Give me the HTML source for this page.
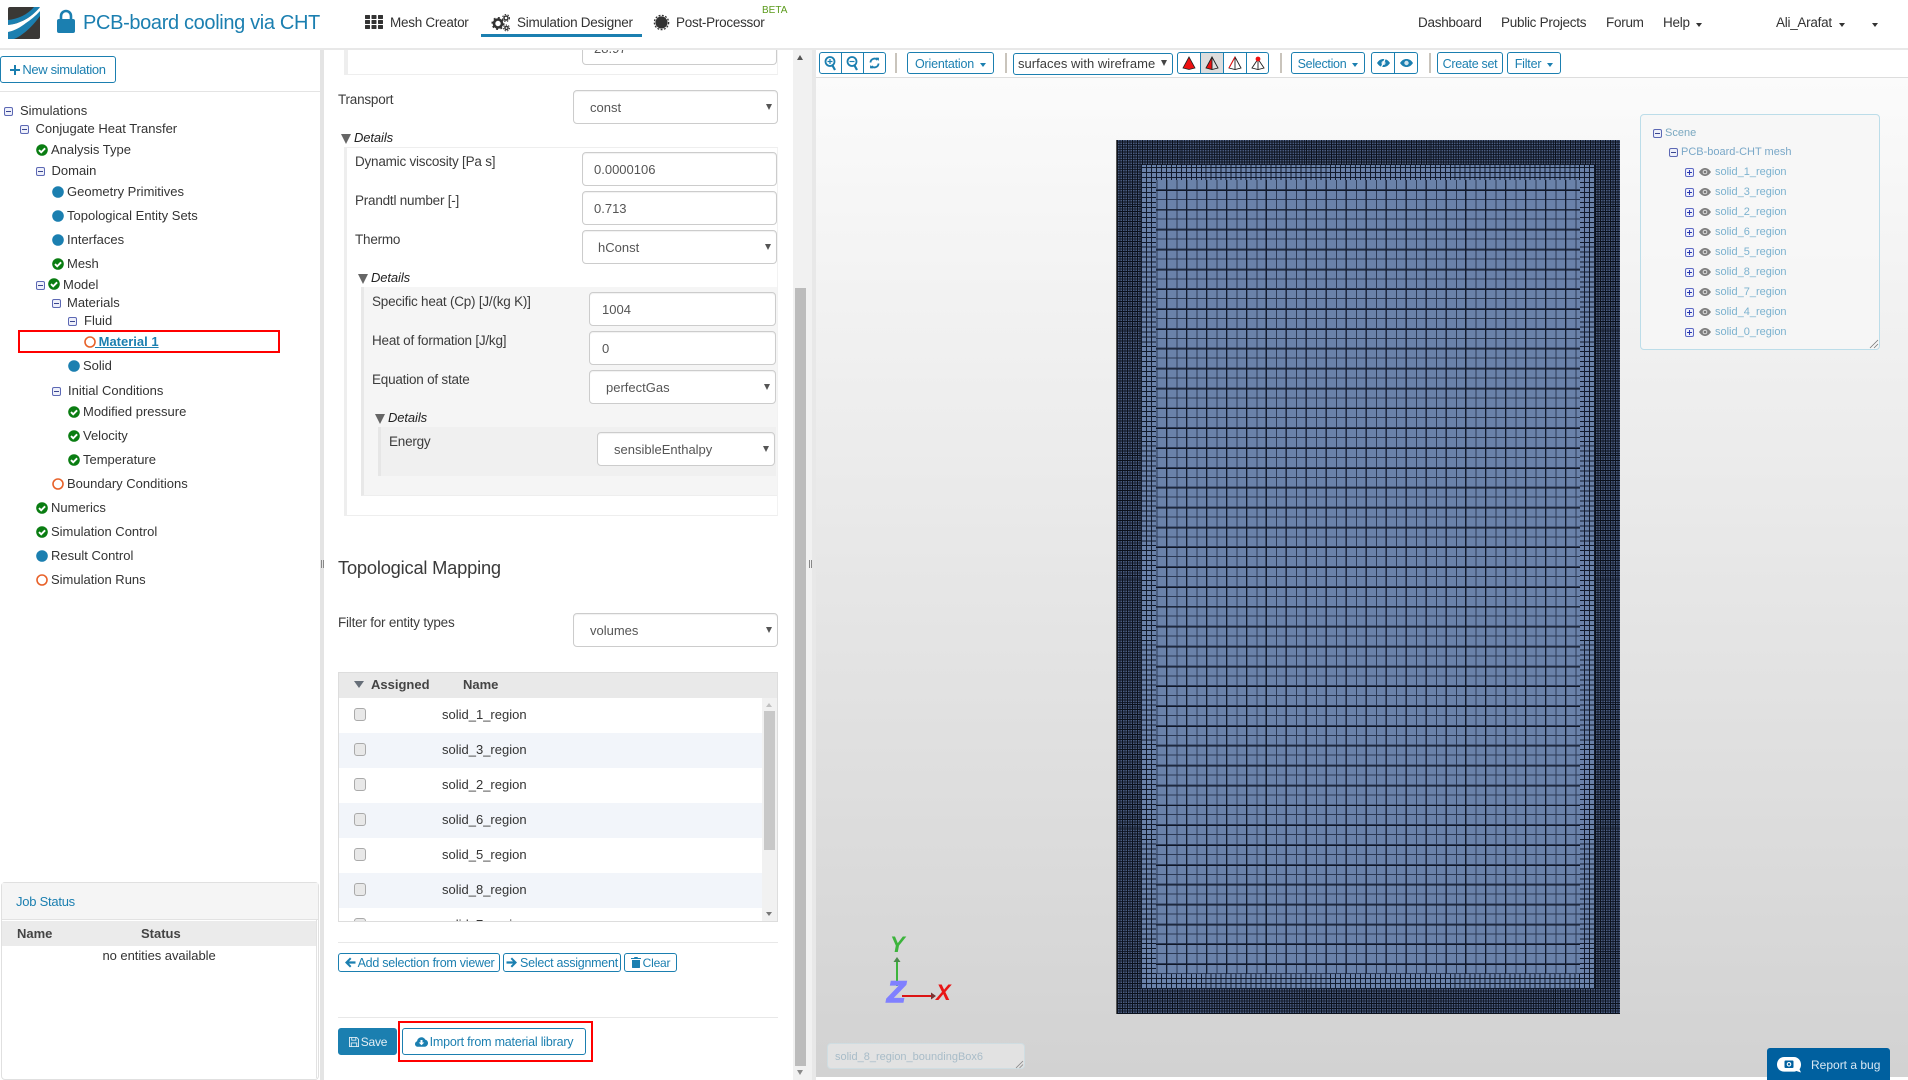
<!DOCTYPE html>
<html lang="en"><head><meta charset="utf-8"><title>PCB-board cooling via CHT</title>
<style>
html,body{margin:0;padding:0;background:#fff}
body{width:1908px;height:1080px;position:relative;overflow:hidden;font-family:"Liberation Sans",sans-serif;font-size:13px;color:#333}
.a,.t,.l,.v,.b,.i,.s,.n{position:absolute;box-sizing:border-box}
.t{line-height:16px;white-space:nowrap}
.l{line-height:16px;white-space:nowrap;font-size:13.5px;letter-spacing:-.22px;color:#3c3c3c;margin-top:1px}
.v{line-height:16px;white-space:nowrap;color:#555}
.n{line-height:16px;white-space:nowrap;font-size:13.5px;letter-spacing:-.27px;color:#333}
.i{background:#fff;border:1px solid #ccc;border-radius:4px;box-shadow:inset 0 1px 1px rgba(0,0,0,.06)}
.i.s1:after{content:"";position:absolute;right:5px;top:13px;border-left:3px solid transparent;border-right:3px solid transparent;border-top:6px solid #555}
.b{border:1px solid #1b7fb0;border-radius:3px;color:#1b7fb0;background:#fff;font-size:12.5px;letter-spacing:-.2px;line-height:16px;white-space:nowrap;display:flex;align-items:center;justify-content:center}
.car{display:inline-block;border-left:3px solid transparent;border-right:3px solid transparent;border-top:4px solid currentColor;margin-left:6px;margin-top:2px}
.tri{position:absolute;width:0;height:0;border-left:5.5px solid transparent;border-right:5.5px solid transparent;border-top:10px solid #666}
.d{font-style:italic;color:#222;position:absolute;line-height:16px;font-size:13px;letter-spacing:-.1px}
svg.ic{position:absolute;overflow:visible}
.tb{color:#3b3b3b;position:absolute;line-height:16px;white-space:nowrap;font-size:13px}
.row{position:absolute;left:339px;width:424px;height:35px;border-bottom:1px solid #e8e8e8}
.cb{position:absolute;left:15px;top:10px;width:12px;height:13px;border:1px solid #aaa;border-radius:3px;background:#e8e8e8;box-sizing:border-box}
.rn{position:absolute;left:103px;top:9px;line-height:16px;color:#333}
.sc{position:absolute;font-size:11px;line-height:14px;white-space:nowrap;color:#7cb2cf;margin-top:1px}
.bar{position:absolute;width:2px;background:#c9c4bc}
</style></head><body>
<svg width="0" height="0" style="position:absolute">
<defs>
<symbol id="ok" viewBox="0 0 12 12"><circle cx="6" cy="6" r="5.8" fill="#0a7d12"/><path d="M3 6.100l2.200 2.200L9.100 4.300" stroke="#fff" stroke-width="1.900" fill="none"/></symbol>
<symbol id="dot" viewBox="0 0 12 12"><circle cx="6" cy="6" r="5.8" fill="#1b7fb0"/></symbol>
<symbol id="ring" viewBox="0 0 12 12"><circle cx="6" cy="6" r="5" fill="#fff" stroke="#e8622a" stroke-width="1.600"/></symbol>
<symbol id="min" viewBox="0 0 9 9"><rect x=".5" y=".5" width="8" height="8" rx="1.500" fill="#eef0fa" stroke="#5c68b4"/><path d="M2 4.500h5" stroke="#3a4690"/></symbol>
<symbol id="pls" viewBox="0 0 9 9"><rect x=".5" y=".5" width="8" height="8" rx="1.500" fill="#eef0fa" stroke="#5c68c4"/><path d="M2 4.500h5M4.500 2v5" stroke="#2a38b0"/></symbol>
<symbol id="eye" viewBox="0 0 12 8"><path d="M0 4C2 1 4 0 6 0s4 1 6 4C10 7 8 8 6 8S2 7 0 4z" fill="#808080"/><circle cx="6" cy="4" r="2.300" fill="#ddd"/><circle cx="6" cy="4" r="1.300" fill="#777"/></symbol>
</defs></svg>

<!-- splitters -->
<div class="a" style="left:320px;top:50px;width:4px;height:1030px;background:#e4e4e4"></div>
<div class="a" style="left:812px;top:50px;width:4px;height:1030px;background:#e8e8e8"></div>

<!-- middle panel -->
<div class="a" style="left:793px;top:50px;width:19px;height:1030px;background:#f1f1f1"></div>
<div class="a" style="left:795px;top:288px;width:11px;height:778px;background:#bcbcbc"></div>
<div class="a" style="left:797px;top:55px;border-left:3.500px solid transparent;border-right:3.500px solid transparent;border-bottom:5px solid #555"></div>
<div class="a" style="left:797px;top:1070px;border-left:3.500px solid transparent;border-right:3.500px solid transparent;border-top:5px solid #8a8a8a"></div>
<div class="a" style="left:321px;top:560px;width:3px;height:8px;border-left:1px solid #888;border-right:1px solid #888;box-sizing:border-box"></div>
<div class="a" style="left:809px;top:560px;width:3px;height:8px;border-left:1px solid #888;border-right:1px solid #888;box-sizing:border-box"></div>

<div class="a" style="left:344px;top:40px;width:434px;height:35px;border-left:4px solid #eee;border-bottom:1px solid #eee;border-right:1px solid #f2f2f2;box-sizing:border-box"></div>
<div class="i" style="left:582px;top:30px;width:195px;height:35px"></div>
<div class="v" style="left:594px;top:41px">28.97</div>

<div class="l" style="left:338px;top:91px">Transport</div>
<div class="i s1" style="left:573px;top:90px;width:205px;height:34px"></div>
<div class="v" style="left:590px;top:100px">const</div>

<div class="tri" style="left:341px;top:134px"></div>
<div class="d" style="left:354px;top:130px">Details</div>

<div class="a" style="left:344px;top:147px;width:434px;height:369px;border-top:1px solid #eee;border-left:3px solid #eee;border-bottom:1px solid #eee;border-right:1px solid #f2f2f2;box-sizing:border-box"></div>
<div class="l" style="left:355px;top:153px">Dynamic viscosity [Pa s]</div>
<div class="i" style="left:582px;top:152px;width:195px;height:34px"></div>
<div class="v" style="left:594px;top:162px">0.0000106</div>
<div class="l" style="left:355px;top:192px">Prandtl number [-]</div>
<div class="i" style="left:582px;top:191px;width:195px;height:34px"></div>
<div class="v" style="left:594px;top:201px">0.713</div>
<div class="l" style="left:355px;top:231px">Thermo</div>
<div class="i s1" style="left:582px;top:230px;width:195px;height:34px"></div>
<div class="v" style="left:598px;top:240px">hConst</div>

<div class="tri" style="left:358px;top:274px"></div>
<div class="d" style="left:371px;top:270px">Details</div>

<div class="a" style="left:361px;top:287px;width:416px;height:209px;background:#f5f5f5;border-left:3px solid #e8e8e8;border-bottom:1px solid #eee;box-sizing:border-box"></div>
<div class="l" style="left:372px;top:293px">Specific heat (Cp) [J/(kg K)]</div>
<div class="i" style="left:589px;top:292px;width:187px;height:34px"></div>
<div class="v" style="left:602px;top:302px">1004</div>
<div class="l" style="left:372px;top:332px">Heat of formation [J/kg]</div>
<div class="i" style="left:589px;top:331px;width:187px;height:34px"></div>
<div class="v" style="left:602px;top:341px">0</div>
<div class="l" style="left:372px;top:371px">Equation of state</div>
<div class="i s1" style="left:589px;top:370px;width:187px;height:34px"></div>
<div class="v" style="left:606px;top:380px">perfectGas</div>

<div class="tri" style="left:375px;top:414px"></div>
<div class="d" style="left:388px;top:410px">Details</div>
<div class="a" style="left:378px;top:427px;width:398px;height:49px;background:#f0f0f0;border-left:3px solid #e6e6e6;box-sizing:border-box"></div>
<div class="l" style="left:389px;top:433px">Energy</div>
<div class="i s1" style="left:597px;top:432px;width:178px;height:34px"></div>
<div class="v" style="left:614px;top:442px">sensibleEnthalpy</div>

<div class="t" style="left:338px;top:556px;line-height:24px;font-size:18.3px;letter-spacing:-.2px;color:#3a3a3a">Topological Mapping</div>
<div class="l" style="left:338px;top:614px">Filter for entity types</div>
<div class="i s1" style="left:573px;top:613px;width:205px;height:34px"></div>
<div class="v" style="left:590px;top:623px">volumes</div>

<!-- assignment table -->
<div class="a" style="left:338px;top:672px;width:440px;height:250px;border:1px solid #ddd;box-sizing:border-box;overflow:hidden;background:#fff"></div>
<div class="a" style="left:339px;top:673px;width:438px;height:25px;background:#e9e9e9"></div>
<div class="a" style="left:354px;top:681px;border-left:5px solid transparent;border-right:5px solid transparent;border-top:7px solid #666e78"></div>
<div class="t" style="left:371px;top:677px;font-weight:bold;color:#444">Assigned</div>
<div class="t" style="left:463px;top:677px;font-weight:bold;color:#444">Name</div>
<div class="a" style="left:339px;top:698px;width:424px;height:223px;overflow:hidden">
<div class="row" style="left:0;top:0;background:#fff"><div class="cb"></div><div class="rn">solid_1_region</div></div>
<div class="row" style="left:0;top:35px;background:#f2f5fa"><div class="cb"></div><div class="rn">solid_3_region</div></div>
<div class="row" style="left:0;top:70px;background:#fff"><div class="cb"></div><div class="rn">solid_2_region</div></div>
<div class="row" style="left:0;top:105px;background:#f2f5fa"><div class="cb"></div><div class="rn">solid_6_region</div></div>
<div class="row" style="left:0;top:140px;background:#fff"><div class="cb"></div><div class="rn">solid_5_region</div></div>
<div class="row" style="left:0;top:175px;background:#f2f5fa"><div class="cb"></div><div class="rn">solid_8_region</div></div>
<div class="row" style="left:0;top:210px;background:#fff"><div class="cb"></div><div class="rn">solid_7_region</div></div>
</div>
<div class="a" style="left:762px;top:698px;width:15px;height:223px;background:#f1f1f1"></div>
<div class="a" style="left:764px;top:711px;width:11px;height:139px;background:#c8c8c8"></div>
<div class="a" style="left:766px;top:703px;border-left:3.500px solid transparent;border-right:3.500px solid transparent;border-bottom:4px solid #c0c0c0"></div>
<div class="a" style="left:766px;top:912px;border-left:3.500px solid transparent;border-right:3.500px solid transparent;border-top:4px solid #777"></div>

<div class="a" style="left:338px;top:942px;width:440px;height:1px;background:#e8e8e8"></div>
<div class="b" style="left:338px;top:953px;width:162px;height:19px;letter-spacing:-.25px"><svg width="12" height="11" viewBox="0 0 12 11" style="margin-right:2px"><path d="M6 .5L1 5.500l5 5 1.400-1.400L5 6.600h6.500V4.400H5l2.400-2.500z" fill="#1b7fb0"/></svg>Add selection from viewer</div>
<div class="b" style="left:503px;top:953px;width:118px;height:19px;letter-spacing:-.25px"><svg width="12" height="11" viewBox="0 0 12 11" style="margin-right:2px"><path d="M6 .5l5 5-5 5-1.400-1.400L7 6.600H.5V4.400H7L4.600 1.900z" fill="#1b7fb0"/></svg>Select assignment</div>
<div class="b" style="left:624px;top:953px;width:53px;height:19px;font-size:12px"><svg width="10" height="11" viewBox="0 0 10 11" style="margin-right:2px"><path d="M3.500 0h3l.5 1h3v1H0V1h3zM1 3h8v7.200c0 .5-.3.8-.8.8H1.800c-.5 0-.8-.3-.8-.8z" fill="#1b7fb0"/></svg>Clear</div>
<div class="a" style="left:338px;top:1017px;width:440px;height:1px;background:#e8e8e8"></div>
<div class="b" style="left:338px;top:1028px;width:59px;height:27px;background:#1b7fb0;color:#e4eef5;font-size:12px;padding-left:1px"><svg width="10" height="10" viewBox="0 0 11 11" style="margin-right:2px"><path d="M.5.5h8l2 2v8H.5z M3 .5v3h4.500v-3 M2.500 10.500v-4h6v4" fill="none" stroke="#e4eef5"/></svg>Save</div>
<div class="b" style="left:402px;top:1028px;width:184px;height:27px"><svg width="13" height="10" viewBox="0 0 13 10" style="margin-right:2px"><path d="M3 9.800C1.300 9.800 0 8.600 0 7c0-1.300.9-2.400 2.100-2.700C2.200 2 4.100.2 6.400.2c1.800 0 3.300 1 4 2.600 1.500.3 2.600 1.600 2.600 3.300 0 2-1.600 3.700-3.600 3.700z" fill="#1b7fb0"/><path d="M5.500 3h2v2.500h1.800L6.500 8.300 3.700 5.500h1.800z" fill="#fff"/></svg>Import from material library</div>
<div class="a" style="left:398px;top:1021px;width:195px;height:41px;border:2.500px solid #f00;box-sizing:border-box"></div>

<!-- left sidebar -->
<div class="b" style="left:0;top:56px;width:116px;height:27px;font-size:13px;letter-spacing:-.35px"><svg width="10" height="10" viewBox="0 0 10 10" style="margin-right:2px"><path d="M4 0h2v4h4v2H6v4H4V6H0V4h4z" fill="#1b7fb0"/></svg>New simulation</div>
<div class="a" style="left:0;top:91px;width:320px;height:1px;background:#e4e4e4"></div>

<svg class="ic" style="left:4px;top:106.500px" width="9" height="9"><use href="#min"/></svg><div class="t" style="left:20px;top:102.500px">Simulations</div>
<svg class="ic" style="left:20px;top:124.500px" width="9" height="9"><use href="#min"/></svg><div class="t" style="left:35.500px;top:121px">Conjugate Heat Transfer</div>
<svg class="ic" style="left:36px;top:144px" width="12" height="12"><use href="#ok"/></svg><div class="t" style="left:51px;top:142px">Analysis Type</div>
<svg class="ic" style="left:36px;top:166.500px" width="9" height="9"><use href="#min"/></svg><div class="t" style="left:51.500px;top:163px">Domain</div>
<svg class="ic" style="left:52px;top:186px" width="12" height="12"><use href="#dot"/></svg><div class="t" style="left:67px;top:184px">Geometry Primitives</div>
<svg class="ic" style="left:52px;top:210px" width="12" height="12"><use href="#dot"/></svg><div class="t" style="left:67px;top:208px">Topological Entity Sets</div>
<svg class="ic" style="left:52px;top:234px" width="12" height="12"><use href="#dot"/></svg><div class="t" style="left:67px;top:232px">Interfaces</div>
<svg class="ic" style="left:52px;top:258px" width="12" height="12"><use href="#ok"/></svg><div class="t" style="left:67px;top:256px">Mesh</div>
<svg class="ic" style="left:36px;top:280.500px" width="9" height="9"><use href="#min"/></svg><svg class="ic" style="left:48px;top:278px" width="12" height="12"><use href="#ok"/></svg><div class="t" style="left:63px;top:277px">Model</div>
<svg class="ic" style="left:52px;top:298.500px" width="9" height="9"><use href="#min"/></svg><div class="t" style="left:67px;top:295px">Materials</div>
<svg class="ic" style="left:68px;top:316.500px" width="9" height="9"><use href="#min"/></svg><div class="t" style="left:84px;top:313px">Fluid</div>
<div class="a" style="left:18px;top:330px;width:262px;height:23px;border:2px solid #f00;box-sizing:border-box"></div>
<svg class="ic" style="left:84px;top:336px" width="12" height="12"><use href="#ring"/></svg><div class="t" style="left:95px;top:334px;font-weight:bold;color:#1b7fb0;text-decoration:underline;white-space:pre"> Material 1</div>
<svg class="ic" style="left:68px;top:360px" width="12" height="12"><use href="#dot"/></svg><div class="t" style="left:83px;top:358px">Solid</div>
<svg class="ic" style="left:52px;top:386.500px" width="9" height="9"><use href="#min"/></svg><div class="t" style="left:68px;top:383px">Initial Conditions</div>
<svg class="ic" style="left:68px;top:406px" width="12" height="12"><use href="#ok"/></svg><div class="t" style="left:83px;top:404px">Modified pressure</div>
<svg class="ic" style="left:68px;top:430px" width="12" height="12"><use href="#ok"/></svg><div class="t" style="left:83px;top:428px">Velocity</div>
<svg class="ic" style="left:68px;top:454px" width="12" height="12"><use href="#ok"/></svg><div class="t" style="left:83px;top:452px">Temperature</div>
<svg class="ic" style="left:52px;top:478px" width="12" height="12"><use href="#ring"/></svg><div class="t" style="left:67px;top:476px">Boundary Conditions</div>
<svg class="ic" style="left:36px;top:502px" width="12" height="12"><use href="#ok"/></svg><div class="t" style="left:51px;top:500px">Numerics</div>
<svg class="ic" style="left:36px;top:526px" width="12" height="12"><use href="#ok"/></svg><div class="t" style="left:51px;top:524px">Simulation Control</div>
<svg class="ic" style="left:36px;top:550px" width="12" height="12"><use href="#dot"/></svg><div class="t" style="left:51px;top:548px">Result Control</div>
<svg class="ic" style="left:36px;top:574px" width="12" height="12"><use href="#ring"/></svg><div class="t" style="left:51px;top:572px">Simulation Runs</div>

<!-- job status -->
<div class="a" style="left:1px;top:882px;width:318px;height:198px;border:1px solid #e0e0e0;border-radius:4px;box-sizing:border-box;background:#fff"></div>
<div class="a" style="left:2px;top:883px;width:316px;height:37px;background:#f5f5f5;border-bottom:1px solid #e2e2e2;box-sizing:border-box"></div>
<div class="t" style="left:16px;top:894px;font-size:13px;letter-spacing:-.25px;color:#1b7fb0">Job Status</div>
<div class="a" style="left:2px;top:921px;width:315px;height:25px;background:#ebebeb"></div>
<div class="t" style="left:17px;top:926px;font-weight:bold;color:#444">Name</div>
<div class="t" style="left:141px;top:926px;font-weight:bold;color:#444">Status</div>
<div class="t" style="left:102.500px;top:948px;font-size:13px;letter-spacing:-.05px;color:#333">no entities available</div>
<div class="a" style="left:316px;top:920px;width:1px;height:158px;background:#e2e2e2"></div>

<!-- viewer -->
<div class="a" style="left:816px;top:77px;width:1092px;height:1000px;border-top:1px solid #ddd;background:linear-gradient(#fbfbfb,#d2d2d2);box-sizing:border-box"></div>

<!-- mesh -->
<div class="a" style="left:1116px;top:140px;width:504px;height:874px;background-color:#4a5c80;background-image:repeating-linear-gradient(90deg,#0b111c 0 1px,transparent 1px 4.98px),repeating-linear-gradient(0deg,#0b111c 0 1px,transparent 1px 4.98px),repeating-linear-gradient(90deg,rgba(14,20,34,.85) 0 1px,transparent 1px 2.49px),repeating-linear-gradient(0deg,rgba(14,20,34,.85) 0 1px,transparent 1px 2.49px);border-left:1px solid #555"></div>
<div class="a" style="left:1141px;top:165px;width:454px;height:824px;background-color:#6a82aa;background-image:repeating-linear-gradient(90deg,#111a2c 0 1px,transparent 1px 4.98px),repeating-linear-gradient(0deg,#111a2c 0 1px,transparent 1px 4.975px)"></div>
<div class="a" style="left:1156px;top:180px;width:424px;height:794px;background-color:#6a82aa;background-image:repeating-linear-gradient(90deg,transparent 0 10px,#121b2e 10px 11px,transparent 11px 19.95px),repeating-linear-gradient(0deg,transparent 0 9px,#101828 9px 10px,transparent 10px 19.85px),repeating-linear-gradient(90deg,transparent 0 0.5px,#2c3a56 0.5px 1.5px,transparent 1.5px 9.975px),repeating-linear-gradient(0deg,#2c3a56 0 1px,transparent 1px 9.925px)"></div>

<!-- triad -->
<svg class="ic" style="left:870px;top:930px" width="90" height="85">
<path d="M27 30V56" stroke="#3cb43c" stroke-width="2"/><path d="M27 27l-3.500 5h7z" fill="#4c8a4c"/>
<path d="M32 66H63" stroke="#dc1414" stroke-width="2"/><path d="M66 66l-5-3.500v7z" fill="#7a3030"/>
<text x="20" y="22" font-family="Liberation Sans" font-style="italic" font-weight="bold" font-size="22" fill="#3cb43c">Y</text>
<text x="66" y="70" font-family="Liberation Sans" font-style="italic" font-weight="bold" font-size="22" fill="#e81616">X</text>
<text x="17" y="72" font-family="Liberation Sans" font-style="italic" font-weight="bold" font-size="30" fill="#8080ff" stroke="#8080ff" stroke-width="1.500">Z</text>
</svg>

<!-- scene tree -->
<div class="a" style="left:1640px;top:114px;width:240px;height:236px;border:1px solid #bcdde9;border-radius:4px;background:rgba(246,246,246,.92);box-sizing:border-box"></div>
<svg class="ic" style="left:1653px;top:129px" width="9" height="9"><use href="#min"/></svg><div class="sc" style="left:1665px;top:125px;color:#7aa8c0">Scene</div>
<svg class="ic" style="left:1669px;top:148px" width="9" height="9"><use href="#min"/></svg><div class="sc" style="left:1681px;top:144px;color:#7aa8c8">PCB-board-CHT mesh</div>
<svg class="ic" style="left:1685px;top:168px" width="9" height="9"><use href="#pls"/></svg><svg class="ic" style="left:1699px;top:168px" width="12" height="8"><use href="#eye"/></svg><div class="sc" style="left:1715px;top:164px">solid_1_region</div>
<svg class="ic" style="left:1685px;top:188px" width="9" height="9"><use href="#pls"/></svg><svg class="ic" style="left:1699px;top:188px" width="12" height="8"><use href="#eye"/></svg><div class="sc" style="left:1715px;top:184px">solid_3_region</div>
<svg class="ic" style="left:1685px;top:208px" width="9" height="9"><use href="#pls"/></svg><svg class="ic" style="left:1699px;top:208px" width="12" height="8"><use href="#eye"/></svg><div class="sc" style="left:1715px;top:204px">solid_2_region</div>
<svg class="ic" style="left:1685px;top:228px" width="9" height="9"><use href="#pls"/></svg><svg class="ic" style="left:1699px;top:228px" width="12" height="8"><use href="#eye"/></svg><div class="sc" style="left:1715px;top:224px">solid_6_region</div>
<svg class="ic" style="left:1685px;top:248px" width="9" height="9"><use href="#pls"/></svg><svg class="ic" style="left:1699px;top:248px" width="12" height="8"><use href="#eye"/></svg><div class="sc" style="left:1715px;top:244px">solid_5_region</div>
<svg class="ic" style="left:1685px;top:268px" width="9" height="9"><use href="#pls"/></svg><svg class="ic" style="left:1699px;top:268px" width="12" height="8"><use href="#eye"/></svg><div class="sc" style="left:1715px;top:264px">solid_8_region</div>
<svg class="ic" style="left:1685px;top:288px" width="9" height="9"><use href="#pls"/></svg><svg class="ic" style="left:1699px;top:288px" width="12" height="8"><use href="#eye"/></svg><div class="sc" style="left:1715px;top:284px">solid_7_region</div>
<svg class="ic" style="left:1685px;top:308px" width="9" height="9"><use href="#pls"/></svg><svg class="ic" style="left:1699px;top:308px" width="12" height="8"><use href="#eye"/></svg><div class="sc" style="left:1715px;top:304px">solid_4_region</div>
<svg class="ic" style="left:1685px;top:328px" width="9" height="9"><use href="#pls"/></svg><svg class="ic" style="left:1699px;top:328px" width="12" height="8"><use href="#eye"/></svg><div class="sc" style="left:1715px;top:324px">solid_0_region</div>
<svg class="ic" style="left:1870px;top:340px" width="8" height="8"><path d="M0 8L8 0M4 8L8 4" stroke="#777" stroke-width=".8"/></svg>

<!-- bottom label -->
<div class="a" style="left:827px;top:1043px;width:198px;height:26px;background:rgba(236,236,236,.6);border:1px solid #cfdde2;border-radius:4px;box-sizing:border-box"></div>
<div class="sc" style="left:835px;top:1049px;color:#a8bcc8">solid_8_region_boundingBox6</div>
<svg class="ic" style="left:1016px;top:1061px" width="7" height="7"><path d="M0 7L7 0M3.500 7L7 3.500" stroke="#888" stroke-width=".8"/></svg>

<!-- report a bug -->
<div class="a" style="left:1767px;top:1048px;width:123px;height:32px;background:#00609f;border-radius:3px 3px 0 0"></div>
<svg class="ic" style="left:1776px;top:1056px" width="26" height="18" viewBox="0 0 26 18"><path d="M8 1h10c4 0 7 3.500 7 7.500 0 2-.5 3.500-1.500 4.700L25 16.500l-4.500-1.500c-1 .5-2 .6-2.500.6H8c-4 0-7-3-7-7.100S4 1 8 1z" fill="#fff"/><rect x="8.500" y="4.500" width="9" height="7.500" rx="1" fill="#00609f"/><circle cx="13" cy="8.300" r="2.300" fill="#fff"/><circle cx="13" cy="8.300" r="1.200" fill="#00609f"/></svg>
<div class="t" style="left:1811px;top:1057px;font-size:12px;color:#d8e8f4">Report a bug</div>

<!-- toolbar -->
<div class="b" style="left:819px;top:52px;width:23px;height:22px;border-radius:3px 0 0 3px"><svg width="13" height="15" viewBox="0 0 13 15"><circle cx="6" cy="5.500" r="4.500" fill="none" stroke="#1b7fb0" stroke-width="1.800"/><path d="M8.500 9.500L11 14" stroke="#1b7fb0" stroke-width="2.200"/><path d="M3.500 5.500h5M6 3v5" stroke="#1b7fb0" stroke-width="1.200"/></svg></div>
<div class="b" style="left:841px;top:52px;width:23px;height:22px;border-radius:0"><svg width="13" height="15" viewBox="0 0 13 15"><circle cx="6" cy="5.500" r="4.500" fill="none" stroke="#1b7fb0" stroke-width="1.800"/><path d="M8.500 9.500L11 14" stroke="#1b7fb0" stroke-width="2.200"/><path d="M3.500 5.500h5" stroke="#1b7fb0" stroke-width="1.200"/></svg></div>
<div class="b" style="left:863px;top:52px;width:23px;height:22px;border-radius:0 3px 3px 0"><svg width="11" height="14" viewBox="0 0 11 14"><path d="M1.500 6.500A4 4 0 0 1 8.500 4M9.500 7.500A4 4 0 0 1 2.500 10" fill="none" stroke="#1b7fb0" stroke-width="1.800"/><path d="M7 1.500l3 .2-.2 3.300zM4 12.500l-3-.2.2-3.300z" fill="#1b7fb0"/></svg></div>
<div class="bar" style="left:895px;top:53px;height:20px"></div>
<div class="b" style="left:907px;top:52px;width:87px;height:22px;padding-top:1px">Orientation<span class="car"></span></div>
<div class="bar" style="left:1005px;top:53px;height:20px"></div>
<div class="a" style="left:1013px;top:53px;width:160px;height:22px;border:1px solid #1b7fb0;border-radius:3px;background:#fff"></div>
<div class="tb" style="left:1018px;top:56px;letter-spacing:.03px">surfaces with wireframe</div>
<div class="a" style="left:1161px;top:60px;border-left:3px solid transparent;border-right:3px solid transparent;border-top:6px solid #444"></div>
<div class="b" style="left:1177px;top:52px;width:24px;height:22px;border-radius:3px 0 0 3px"><svg width="14" height="14" viewBox="0 0 14 14"><path d="M7 1L1 12l6 1.500 6-1.500z" fill="#ee1010" stroke="#222" stroke-width=".8"/></svg></div>
<div class="b" style="left:1200px;top:52px;width:24px;height:22px;border-radius:0;background:#ddd;border-color:#1b7fb0"><svg width="14" height="14" viewBox="0 0 14 14"><path d="M7 1L1 12l6 1.500z" fill="#ee1010"/><path d="M7 1L1 12l6 1.500 6-1.500zM7 1v12.500" fill="none" stroke="#222" stroke-width=".9"/></svg></div>
<div class="b" style="left:1223px;top:52px;width:24px;height:22px;border-radius:0"><svg width="14" height="14" viewBox="0 0 14 14"><path d="M7 1L1 12l6 1.500 6-1.500zM7 1v12.500" fill="none" stroke="#222" stroke-width=".9"/><path d="M7 1L1 12" stroke="#ee1010"/></svg></div>
<div class="b" style="left:1246px;top:52px;width:23px;height:22px;border-radius:0 3px 3px 0"><svg width="14" height="14" viewBox="0 0 14 14"><path d="M7 3L1 12l6 1.500 6-1.500zM7 3v10.500" fill="none" stroke="#222" stroke-width=".9"/><circle cx="7" cy="3" r="2.400" fill="#ee1010"/></svg></div>
<div class="bar" style="left:1280px;top:53px;height:20px"></div>
<div class="b" style="left:1291px;top:52px;width:74px;height:22px;padding-top:1px;letter-spacing:-.3px">Selection<span class="car"></span></div>
<div class="b" style="left:1371px;top:52px;width:24px;height:22px;border-radius:3px 0 0 3px"><svg width="13" height="10" viewBox="0 0 13 10"><path d="M0 5C2 2 4 1 6.500 1S11 2 13 5c-2 3-4 4-6.500 4S2 8 0 5z" fill="#1b7fb0"/><circle cx="6.500" cy="5" r="2" fill="#cfe3ee"/><path d="M8.500 0L4 10" stroke="#fff" stroke-width="1.300"/></svg></div>
<div class="b" style="left:1394px;top:52px;width:24px;height:22px;border-radius:0 3px 3px 0"><svg width="13" height="10" viewBox="0 0 13 10"><path d="M0 5C2 2 4 1 6.500 1S11 2 13 5c-2 3-4 4-6.500 4S2 8 0 5z" fill="#1b7fb0"/><circle cx="6.500" cy="5" r="2.200" fill="#cfe3ee"/></svg></div>
<div class="bar" style="left:1429px;top:53px;height:20px"></div>
<div class="b" style="left:1437px;top:52px;width:66px;height:22px;padding-top:1px;letter-spacing:-.3px">Create set</div>
<div class="b" style="left:1507px;top:52px;width:54px;height:22px;padding-top:1px">Filter<span class="car"></span></div>

<!-- header -->
<div class="a" style="left:0;top:0;width:1908px;height:50px;background:#fff;border-bottom:2px solid #e8e8e8;box-sizing:border-box"></div>
<svg class="ic" style="left:8px;top:7px" width="32" height="32" viewBox="0 0 32 32">
<rect width="32" height="32" rx="2" fill="#3a3835"/>
<path d="M0 32V18C8 18 20 14 32 0v8C22 22 12 28 4 32z" fill="#fff"/>
<path d="M0 25C10 23 22 15 32 1V9C24 20 14 29 6 32H0z" fill="#1b7fb0"/>
<path d="M0 13C10 12 19 8 26 0h6C24 10 12 17 0 18z" fill="#1b7fb0"/>
<path d="M0 18C12 17 24 10 32 1v3C24 13 12 21 0 23z" fill="#fff"/>
</svg>
<svg class="ic" style="left:57px;top:10px" width="18" height="23" viewBox="0 0 18 23"><path d="M4 10V6a5 5 0 0 1 10 0v4" fill="none" stroke="#1b7fb0" stroke-width="2.600"/><rect x="0" y="9" width="18" height="14" rx="2" fill="#1b7fb0"/></svg>
<div class="t" style="left:83px;top:11px;line-height:24px;font-size:20px;letter-spacing:-.35px;color:#1b7fb0">PCB-board cooling via CHT</div>

<svg class="ic" style="left:365px;top:15px" width="18" height="14" viewBox="0 0 18 14"><g fill="#333"><rect width="5" height="4" rx=".6"/><rect x="6.500" width="5" height="4" rx=".6"/><rect x="13" width="5" height="4" rx=".6"/><rect y="5" width="5" height="4" rx=".6"/><rect x="6.500" y="5" width="5" height="4" rx=".6"/><rect x="13" y="5" width="5" height="4" rx=".6"/><rect y="10" width="5" height="4" rx=".6"/><rect x="6.500" y="10" width="5" height="4" rx=".6"/><rect x="13" y="10" width="5" height="4" rx=".6"/></g></svg>
<div class="n" style="left:390px;top:15px">Mesh Creator</div>
<svg class="ic" style="left:491px;top:14px" width="19" height="17" viewBox="0 0 19 17"><circle cx="7" cy="9.500" r="4" fill="none" stroke="#333" stroke-width="2.600"/><circle cx="7" cy="9.500" r="5.800" fill="none" stroke="#333" stroke-width="1.500" stroke-dasharray="2 2.500"/><circle cx="15" cy="4" r="2" fill="none" stroke="#333" stroke-width="1.500"/><circle cx="15" cy="4" r="3.500" fill="none" stroke="#333" stroke-width="1" stroke-dasharray="1.500 1.500"/><circle cx="15.500" cy="14" r="1.600" fill="none" stroke="#333" stroke-width="1.400"/><circle cx="15.500" cy="14" r="3" fill="none" stroke="#333" stroke-width="1" stroke-dasharray="1.300 1.300"/></svg>
<div class="n" style="left:517px;top:15px">Simulation Designer</div>
<div class="a" style="left:481px;top:34px;width:161px;height:3px;background:#1b7fb0"></div>
<svg class="ic" style="left:654px;top:15px" width="15" height="15" viewBox="0 0 16 16"><circle cx="8" cy="8" r="6.500" fill="#333"/><circle cx="8" cy="8" r="7.600" fill="none" stroke="#333" stroke-width="1.400" stroke-dasharray="2 1.600"/></svg>
<div class="n" style="left:676px;top:15px">Post-Processor</div>
<div class="t" style="left:762px;top:3px;font-size:10px;color:#5a9a1a">BETA</div>

<div class="n" style="left:1418px;top:15px">Dashboard</div>
<div class="n" style="left:1501px;top:15px">Public Projects</div>
<div class="n" style="left:1606px;top:15px">Forum</div>
<div class="n" style="left:1663px;top:15px">Help</div>
<div class="a" style="left:1696px;top:23px;border-left:3.500px solid transparent;border-right:3.500px solid transparent;border-top:4px solid #333"></div>
<div class="n" style="left:1776px;top:15px">Ali_Arafat</div>
<div class="a" style="left:1839px;top:23px;border-left:3.500px solid transparent;border-right:3.500px solid transparent;border-top:4px solid #333"></div>
<div class="a" style="left:1872px;top:23px;border-left:3.500px solid transparent;border-right:3.500px solid transparent;border-top:4px solid #333"></div>
</body></html>
